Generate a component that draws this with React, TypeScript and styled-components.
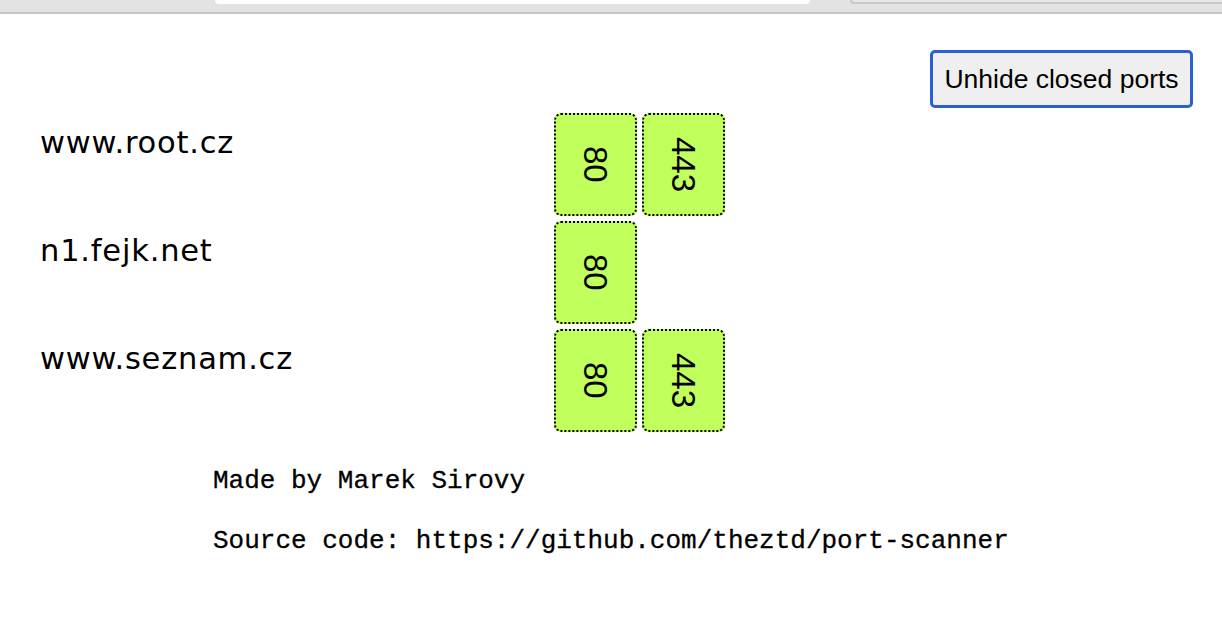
import React from "react";
import styled, { createGlobalStyle } from "styled-components";

const Global = createGlobalStyle`
  html, body { margin: 0; padding: 0; background: #ffffff; }
  body { font-family: "DejaVu Sans", Verdana, sans-serif; color: #000; }
`;

const Chrome = styled.div`
  height: 12px;
  background: #e3e3e3;
  border-bottom: 2px solid #c6c6c6;
  display: flex;
  align-items: flex-start;
  overflow: hidden;
`;

const ActiveTab = styled.div`
  margin-left: 215px;
  width: 595px;
  height: 4px;
  background: #ffffff;
  border-radius: 0 0 10px 10px;
`;

const OtherTab = styled.div`
  margin-left: 40px;
  flex: 1;
  height: 2px;
  border-left: 2px solid #c9c9c9;
  border-bottom: 2px solid #c9c9c9;
  border-bottom-left-radius: 8px;
  background: #e6e6e6;
`;

const Page = styled.main`
  display: flex;
  flex-direction: column;
`;

const Toolbar = styled.div`
  display: flex;
  justify-content: flex-end;
  padding: 36px 29px 0 0;
`;

const ToggleButton = styled.button`
  box-sizing: border-box;
  width: 263px;
  height: 58px;
  background: #efefef;
  border: 3px solid #2c60cc;
  border-radius: 5px;
  font-family: "Liberation Sans", Arial, sans-serif;
  font-size: 26.5px;
  color: #000;
  padding: 0 8px;
  white-space: nowrap;
  cursor: pointer;
`;

const HostList = styled.div`
  display: grid;
  grid-template-columns: 514px auto;
  row-gap: 5px;
  padding: 5px 0 0 40px;
`;

const HostName = styled.div`
  font-family: "DejaVu Sans", Verdana, sans-serif;
  font-size: 30.5px;
  line-height: 36px;
  padding-top: 12px;
  letter-spacing: 0.8px;
`;

const Ports = styled.div`
  display: flex;
  gap: 5px;
`;

const PortBox = styled.div`
  box-sizing: border-box;
  width: 83px;
  height: 103px;
  background: #c0ff5c;
  border: 2px dotted #000;
  border-radius: 7px;
  display: flex;
  align-items: center;
  justify-content: center;
`;

const PortNumber = styled.span`
  writing-mode: vertical-rl;
  font-family: "Liberation Sans", Arial, sans-serif;
  font-size: 33px;
  line-height: 1;
`;

const Footer = styled.footer`
  padding: 34px 0 0 213px;
  font-family: "Liberation Mono", "Courier New", monospace;
  font-size: 26px;
`;

const FooterLine = styled.p`
  margin: 0 0 30px 0;
  line-height: 30px;
  -webkit-text-stroke: 0.3px #000;
`;

const hosts: { name: string; ports: number[] }[] = [
  { name: "www.root.cz", ports: [80, 443] },
  { name: "n1.fejk.net", ports: [80] },
  { name: "www.seznam.cz", ports: [80, 443] },
];

export default function App() {
  return (
    <>
      <Global />
      <Chrome>
        <ActiveTab />
        <OtherTab />
      </Chrome>
      <Page>
        <Toolbar>
          <ToggleButton>Unhide closed ports</ToggleButton>
        </Toolbar>
        <HostList>
          {hosts.map((h) => (
            <React.Fragment key={h.name}>
              <HostName>{h.name}</HostName>
              <Ports>
                {h.ports.map((p) => (
                  <PortBox key={p}>
                    <PortNumber>{p}</PortNumber>
                  </PortBox>
                ))}
              </Ports>
            </React.Fragment>
          ))}
        </HostList>
        <Footer>
          <FooterLine>Made by Marek Sirovy</FooterLine>
          <FooterLine>Source code: https://github.com/theztd/port-scanner</FooterLine>
        </Footer>
      </Page>
    </>
  );
}
